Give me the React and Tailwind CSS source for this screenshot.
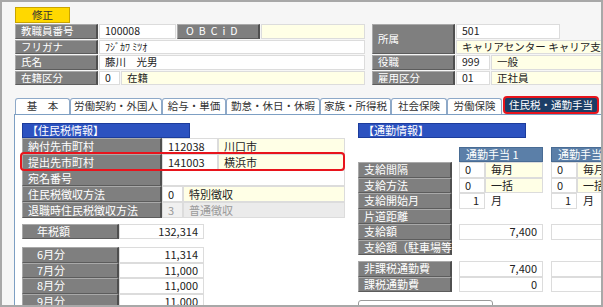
import React from 'react';

const font = { fontFamily: '"Noto Sans CJK JP", "Noto Sans", sans-serif' };

// gray bevelled label cell
function Lbl({ className = '', children }) {
  return (
    <div className={`flex items-center shrink-0 bg-[#7f7f7f] text-white border-t border-l border-t-[#a9a9a9] border-l-[#a9a9a9] border-r-2 border-b border-r-[#4f4f4f] border-b-[#5c5c5c] pl-[5px] whitespace-nowrap ${className}`}>
      {children}
    </div>
  );
}

function Val({ className = '', children }) {
  return (
    <div className={`flex items-center shrink-0 border border-[#dcdcdc] px-[5px] whitespace-nowrap ${className}`}>
      {children}
    </div>
  );
}

const tabs = [
  ['基　本', 'w-[55px]'],
  ['労働契約・外国人', 'w-[92px]'],
  ['給与・単価', 'w-[64px]'],
  ['勤怠・休日・休暇', 'w-[94px]'],
  ['家族・所得税', 'w-[71px]'],
  ['社会保険', 'w-[56px]'],
  ['労働保険', 'w-[55px]'],
];

const months = [
  ['6月分', '11,314'],
  ['7月分', '11,000'],
  ['8月分', '11,000'],
  ['9月分', '11,000'],
];

export default function App() {
  return (
    <div style={font} className="w-[603px] h-[307px] border-2 border-[#a8a8a8] bg-[#f6f6f6] overflow-hidden flex flex-col pl-[12px] pt-[5px] text-[11px] leading-none text-[#222]">
      {/* 修正 */}
      <div className="ml-px w-[55px] h-[16px] shrink-0 flex items-center justify-center bg-[#ffd800] border border-[#c9a400] text-[#333] text-[10.5px]">修正</div>

      {/* header info */}
      <div className="flex mt-px ml-px shrink-0 text-[10.5px]">
        <div className="w-[350px] shrink-0 grid grid-cols-[83px_21px_55px_83px_1fr] grid-rows-[repeat(4,14.5px)] gap-px">
          <Lbl>教職員番号</Lbl>
          <Val className="col-span-2 bg-white">100008</Val>
          <Lbl className="tracking-[5px] pl-[8px]">OBCiD</Lbl>
          <Val className="bg-[#ffffe6]"></Val>

          <Lbl>フリガナ</Lbl>
          <Val className="col-span-4 bg-white text-[10px]">ﾌｼﾞｶﾜ ﾐﾂｵ</Val>

          <Lbl>氏名</Lbl>
          <Val className="col-span-4 bg-white">藤川　光男</Val>

          <Lbl>在籍区分</Lbl>
          <Val className="bg-white">0</Val>
          <Val className="col-span-3 bg-[#ffffe6]">在籍</Val>
        </div>

        <div className="ml-[7px] w-[240px] shrink-0 grid grid-cols-[83px_34px_69px_1fr] grid-rows-[repeat(4,14.5px)] gap-px">
          <Lbl className="row-span-2">所属</Lbl>
          <Val className="col-span-2 bg-white">501</Val>
          <div></div>
          <Val className="col-span-3 bg-[#ffffe6]">キャリアセンター キャリア支援</Val>

          <Lbl>役職</Lbl>
          <Val className="bg-white">999</Val>
          <Val className="col-span-2 bg-[#ffffe6]">一般</Val>

          <Lbl>雇用区分</Lbl>
          <Val className="bg-white">01</Val>
          <Val className="col-span-2 bg-[#ffffe6]">正社員</Val>
        </div>
      </div>

      {/* tabs */}
      <div className="flex items-end mt-[12px] ml-px h-[17px] shrink-0 text-[10.5px]">
        {tabs.map(([t, w]) => (
          <div key={t} className={`${w} h-[16px] shrink-0 flex items-center justify-center bg-white border border-b-0 border-[#8ea9c8] rounded-t-[3px] text-[#333] whitespace-nowrap`}>
            {t}
          </div>
        ))}
        <div className="ml-px w-[96px] h-[18px] shrink-0 flex items-center justify-center bg-[#1c3e66] text-white border-2 border-[#e8141c] rounded-[4px] whitespace-nowrap">
          住民税・通勤手当
        </div>
      </div>

      {/* panel */}
      <div className="flex-1 bg-white border-l border-t border-[#7d9fc3] pl-[7px] pt-[8px] flex">
        {/* left: 住民税 */}
        <div className="w-[323px] shrink-0 flex flex-col">
          <div className="w-[168px] h-[15px] flex items-center pl-[4px] bg-[#2c52c0] border border-[#1c3c9c] text-white">【住民税情報】</div>

          <div className="relative flex flex-col">
            <div className="flex h-4">
              <Lbl className="w-[140px]">納付先市町村</Lbl>
              <Val className="w-[56px] bg-white">112038</Val>
              <Val className="flex-1 bg-[#ffffe6]">川口市</Val>
            </div>
            <div className="flex h-4">
              <Lbl className="w-[140px]">提出先市町村</Lbl>
              <Val className="w-[56px] bg-white">141003</Val>
              <Val className="flex-1 bg-[#ffffe6]">横浜市</Val>
            </div>
            <div className="flex h-4">
              <Lbl className="w-[140px]">宛名番号</Lbl>
              <Val className="flex-1 bg-white"></Val>
            </div>
            <div className="flex h-4">
              <Lbl className="w-[140px]">住民税徴収方法</Lbl>
              <Val className="w-[21px] bg-white">0</Val>
              <Val className="flex-1 bg-[#ffffe6]">特別徴収</Val>
            </div>
            <div className="flex h-4">
              <Lbl className="w-[140px]">退職時住民税徴収方法</Lbl>
              <Val className="w-[21px] bg-[#f0f0f0] text-[#9a9a9a]">3</Val>
              <Val className="flex-1 bg-[#ebebeb] text-[#9a9a9a]">普通徴収</Val>
            </div>
            <div className="absolute left-[-2px] top-[14px] w-[325px] h-[19px] border-2 border-[#e8141c] rounded-[4px]"></div>
          </div>

          <div className="flex h-[15px] mt-[6px]">
            <Lbl className="w-[97px] pl-[14px]">年税額</Lbl>
            <Val className="w-[85px] justify-end bg-white">132,314</Val>
          </div>

          <div className="flex flex-col mt-[8px]">
            {months.map(([m, v]) => (
              <div key={m} className="flex h-[15.5px]">
                <Lbl className="w-[97px] pl-[14px]">{m}</Lbl>
                <Val className="w-[85px] justify-end bg-white">{v}</Val>
              </div>
            ))}
          </div>
        </div>

        {/* right: 通勤 */}
        <div className="ml-[13px] w-[260px] shrink-0 flex flex-col">
          <div className="w-[168px] h-[15px] flex items-center pl-[4px] bg-[#2c52c0] border border-[#1c3c9c] text-white">【通勤情報】</div>

          <div className="flex h-[15px] mt-[9px]">
            <div className="w-[101px] shrink-0"></div>
            <div className="w-[84px] shrink-0 flex items-center pl-[6px] bg-[#5b7fa8] border border-[#496c94] text-white">通勤手当 1</div>
            <div className="ml-[8px] w-[84px] shrink-0 flex items-center pl-[6px] bg-[#5b7fa8] border border-[#496c94] text-white">通勤手当 2</div>
          </div>

          <div className="flex">
            <div className="w-[94px] shrink-0 flex flex-col">
              <Lbl className="h-[15.5px]">支給間隔</Lbl>
              <Lbl className="h-[15.5px]">支給方法</Lbl>
              <Lbl className="h-[15.5px]">支給開始月</Lbl>
              <Lbl className="h-[15.5px]">片道距離</Lbl>
              <Lbl className="h-[15.5px]">支給額</Lbl>
              <Lbl className="h-[15.5px]">支給額（駐車場等）</Lbl>
            </div>
            {[['7,400'], ['']].map(([amt], i) => (
              <div key={i} className={`${i === 0 ? 'ml-[7px]' : 'ml-[8px]'} w-[84px] shrink-0 flex flex-col`}>
                <div className="flex h-[15.5px]">
                  <Val className="w-[26px] bg-white">0</Val>
                  <Val className="flex-1 bg-[#ffffe6]">毎月</Val>
                </div>
                <div className="flex h-[15.5px]">
                  <Val className="w-[26px] bg-white">0</Val>
                  <Val className="flex-1 bg-[#ffffe6]">一括</Val>
                </div>
                <div className="flex h-[15.5px] items-center">
                  <Val className="w-[26px] h-full justify-end bg-white">1</Val>
                  <span className="ml-[6px]">月</span>
                </div>
                <div className="h-[15.5px]"></div>
                <Val className="h-[15.5px] justify-end bg-white border-[#c8c8c8]">{amt}</Val>
                <div className="h-[15.5px]"></div>
              </div>
            ))}
          </div>

          <div className="flex flex-col mt-[6px]">
            {[['非課税通勤費', '7,400'], ['課税通勤費', '0']].map(([l, v]) => (
              <div key={l} className="flex h-[15.5px]">
                <Lbl className="w-[94px]">{l}</Lbl>
                <Val className="ml-[7px] w-[84px] justify-end bg-white border-[#c8c8c8]">{v}</Val>
                <Val className="ml-[8px] w-[84px] bg-white border-[#c8c8c8]"></Val>
              </div>
            ))}
          </div>

          <div className="mt-[8px] w-[135px] h-[20px] shrink-0 flex items-center justify-center border border-[#9a9a9a] rounded-[3px] bg-white text-[#2050c0]">通勤手当明細(2)</div>
        </div>
      </div>
    </div>
  );
}
